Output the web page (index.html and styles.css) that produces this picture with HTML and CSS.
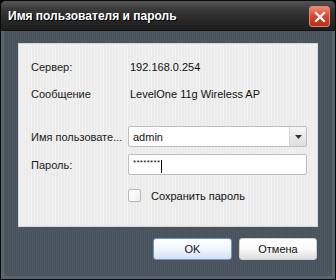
FILE: index.html
```html
<!DOCTYPE html>
<html lang="ru">
<head>
    <meta charset="UTF-8">
    <title>Имя пользователя и пароль</title>
    <link rel="stylesheet" href="styles.css">
</head>
<body>
    <div class="window">
        <div class="titlebar">
            <span class="title">Имя пользователя и пароль</span>
            <div class="close-btn">
                <svg width="12" height="12" viewBox="0 0 12 12">
                    <path d="M2 2 L10 10 M10 2 L2 10" stroke="#fff" stroke-width="2.2" stroke-linecap="square"/>
                </svg>
            </div>
        </div>

        <div class="frame">
            <div class="panel">
                <div class="row info-row">
                    <span class="label">Сервер:</span>
                    <span class="value">192.168.0.254</span>
                </div>
                <div class="row info-row row-message">
                    <span class="label">Сообщение</span>
                    <span class="value">LevelOne 11g Wireless AP</span>
                </div>

                <div class="row field-row row-user">
                    <span class="label">Имя пользовате...</span>
                    <div class="combo">
                        <span class="combo-text">admin</span>
                        <div class="combo-btn">
                            <svg width="7" height="4" viewBox="0 0 7 4">
                                <path d="M0 0 H7 L3.5 4 Z" fill="#333"/>
                            </svg>
                        </div>
                    </div>
                </div>
                <div class="row field-row row-pass">
                    <span class="label">Пароль:</span>
                    <div class="textbox">
                        <span class="stars">********</span><span class="caret"></span>
                    </div>
                </div>

                <div class="row check-row">
                    <span class="checkbox"></span>
                    <span class="check-label">Сохранить пароль</span>
                </div>
            </div>

            <div class="buttons">
                <div class="btn btn-default">OK</div>
                <div class="btn">Отмена</div>
            </div>
        </div>
    </div>
</body>
</html>
```

FILE: styles.css
```css
body {
    margin: 0;
    font-family: 'Liberation Sans', 'DejaVu Sans', sans-serif;
    font-size: 11px;
    color: #111;
    background-color: #000;
}

.window {
    width: 336px;
    height: 280px;
    box-sizing: border-box;
    border: 1px solid #0a0a0a;
    border-radius: 6px 6px 0 0;
    display: flex;
    flex-direction: column;
    overflow: hidden;
    background-color: #48535d;
}

.titlebar {
    height: 29px;
    display: flex;
    align-items: center;
    justify-content: space-between;
    padding: 0 5px 0 7px;
    background: linear-gradient(#555, #383838 30%, #262626 70%, #1e1e1e);
    border-bottom: 1px solid #111;
}

.title {
    color: #fff;
    font-weight: bold;
    font-size: 12px;
    text-shadow: 1px 1px 0 #000;
}

.close-btn {
    width: 19px;
    height: 19px;
    margin-top: 2px;
    border: 1px solid #d98a7a;
    border-radius: 3px;
    background: linear-gradient(#f08a6e, #d9432a 50%, #b5301c);
    display: flex;
    align-items: center;
    justify-content: center;
}

/* dialog body with the striped slate background */
.frame {
    flex: 1;
    padding: 12px 14px 0 14px;
    border-left: 3px solid #5a646d;
    border-right: 3px solid #5a646d;
    border-bottom: 3px solid #5a646d;
    background-color: #47525c;
    background-image: repeating-linear-gradient(90deg, rgba(255, 255, 255, 0.04) 0, rgba(255, 255, 255, 0.04) 1px, transparent 1px, transparent 2px);
    display: flex;
    flex-direction: column;
}

.panel {
    height: 184px;
    box-sizing: border-box;
    padding: 15px 10px 0 12px;
    background-color: #ebebeb;
    background-image: repeating-linear-gradient(90deg, rgba(255, 255, 255, 0.35) 0, rgba(255, 255, 255, 0.35) 1px, transparent 1px, transparent 3px);
    border: 1px solid #d8d8d8;
    display: flex;
    flex-direction: column;
}

.row {
    display: flex;
    align-items: center;
}

.label {
    width: 97px;
    flex-shrink: 0;
    color: #1a1a1a;
}

.value {
    padding-left: 2px;
    color: #111;
}

.info-row {
    height: 16px;
}

.row-message {
    margin-top: 11px;
}

.row-user {
    margin-top: 24px;
}

.row-pass {
    margin-top: 7px;
}

.combo,
.textbox {
    width: 179px;
    height: 21px;
    box-sizing: border-box;
    border: 1px solid #b9bec4;
    border-radius: 2px;
    background-color: #fff;
    display: flex;
    align-items: center;
}

.combo-text {
    flex: 1;
    padding-left: 4px;
}

.combo-btn {
    width: 16px;
    height: 19px;
    border-left: 1px solid #d0d4d8;
    background: linear-gradient(#f6f6f6, #dedede);
    display: flex;
    align-items: center;
    justify-content: center;
}

.textbox {
    padding-left: 4px;
}

.stars {
    font-size: 8px;
    letter-spacing: 0.3px;
    position: relative;
    top: -2px;
}

.caret {
    width: 1px;
    height: 13px;
    margin-left: 1px;
    margin-top: 3px;
    background-color: #000;
}

.check-row {
    margin-top: 14px;
    padding-left: 97px;
}

.checkbox {
    width: 11px;
    height: 11px;
    border: 1px solid #b3b8be;
    border-radius: 2px;
    background: linear-gradient(135deg, #fff, #f0f0f0);
}

.check-label {
    margin-left: 10px;
}

.buttons {
    display: flex;
    justify-content: flex-end;
    gap: 7px;
    margin-top: 11px;
    margin-right: 1px;
}

.btn {
    width: 78px;
    height: 22px;
    box-sizing: border-box;
    border: 1px solid #d0d0d0;
    border-radius: 3px;
    background: linear-gradient(#fff, #fafafa 50%, #dcdcdc);
    display: flex;
    align-items: center;
    justify-content: center;
    color: #111;
}

.btn-default {
    width: 79px;
    border: 1px solid #6f93c8;
    background: linear-gradient(#fff, #f0f6fc 50%, #d2e2f4);
}
```
